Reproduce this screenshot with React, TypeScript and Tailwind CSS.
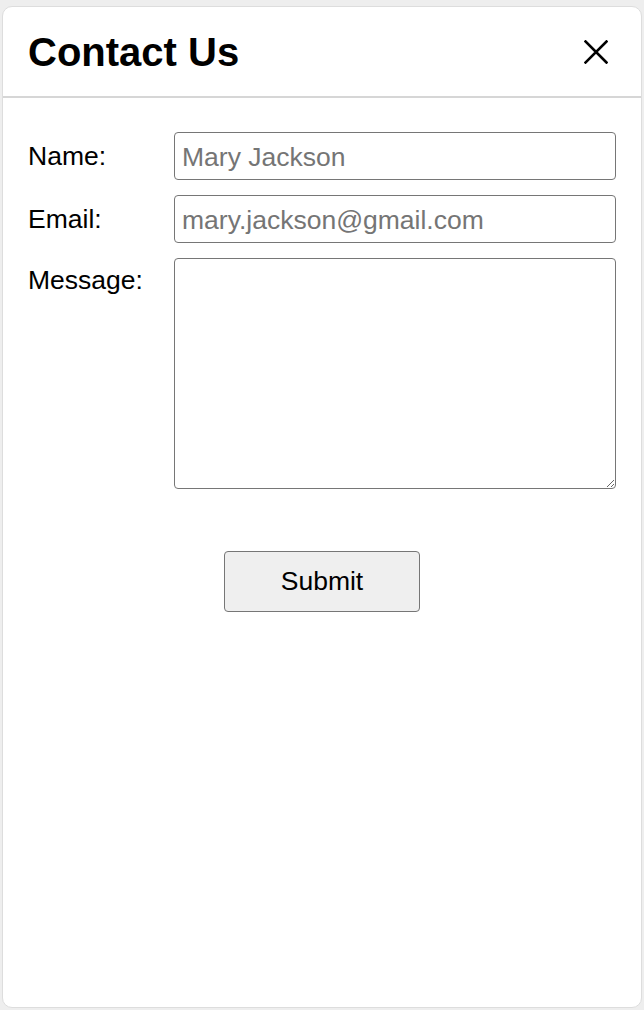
import React from 'react';

export default function App() {
  return (
    <div className="min-h-screen bg-[#eeeeee] px-[2px] pt-[6px] pb-[2px] font-['Liberation_Sans',Arial,sans-serif] text-black">
      <div className="h-[1002px] rounded-[10px] border border-[#dddddd] bg-white">
        {/* Header */}
        <div className="flex h-[91px] items-center justify-between border-b-2 border-[#d6d6d6] pl-[25px] pr-[32px]">
          <h1 className="text-[40px] font-bold">Contact Us</h1>
          <button className="flex h-[26px] w-[26px] items-center justify-center" aria-label="Close">
            <svg width="24" height="24" viewBox="0 0 24 24" fill="none" stroke="black" strokeWidth="2.6" strokeLinecap="square">
              <path d="M1.5 1.5 L22.5 22.5 M22.5 1.5 L1.5 22.5" />
            </svg>
          </button>
        </div>

        {/* Form */}
        <form className="flex flex-col gap-[15px] pl-[25px] pr-[25px] pt-[34px]" onSubmit={e => e.preventDefault()}>
          <div className="flex items-center">
            <label className="w-[146px] pt-[2px] text-[26.5px]">Name:</label>
            <input
              className="h-[48px] flex-1 rounded-[4px] border-[1.5px] border-[#767676] px-[7px] pt-[2px] text-[26.5px] placeholder:text-[#757575]"
              placeholder="Mary Jackson"
            />
          </div>
          <div className="flex items-center">
            <label className="w-[146px] pt-[2px] text-[26.5px]">Email:</label>
            <input
              className="h-[48px] flex-1 rounded-[4px] border-[1.5px] border-[#767676] px-[7px] pt-[2px] text-[26.5px] placeholder:text-[#757575]"
              placeholder="mary.jackson@gmail.com"
            />
          </div>
          <div className="flex items-start">
            <label className="w-[146px] pt-[6px] text-[26.5px] leading-[32px]">Message:</label>
            <textarea className="h-[231px] flex-1 resize-y rounded-[4px] border-[1.5px] border-[#767676] px-[7px] py-[4px] text-[26.5px]" />
          </div>
          <div className="flex justify-center pt-[47px]">
            <button
              type="submit"
              className="h-[61px] w-[196px] rounded-[4px] border-[1.5px] border-[#767676] bg-[#efefef] text-[26.5px]"
            >
              Submit
            </button>
          </div>
        </form>
      </div>
    </div>
  );
}
